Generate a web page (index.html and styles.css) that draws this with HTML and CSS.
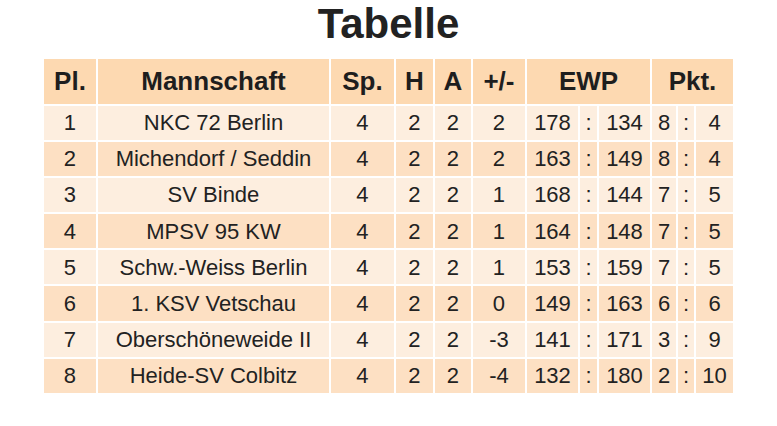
FILE: index.html
```html
<!DOCTYPE html>
<html lang="de">
<head>
<meta charset="utf-8">
<title>Tabelle</title>
<link rel="stylesheet" href="styles.css">
</head>
<body>
<h1 class="title">Tabelle</h1>
<table class="standings">
  <colgroup>
    <col class="c-pl"><col class="c-team"><col class="c-sp"><col class="c-h"><col class="c-a"><col class="c-diff">
    <col class="c-ewp1"><col class="c-colon1"><col class="c-ewp2"><col class="c-pkt1"><col class="c-colon2"><col class="c-pkt2">
  </colgroup>
  <thead>
    <tr><th>Pl.</th><th>Mannschaft</th><th>Sp.</th><th>H</th><th>A</th><th>+/-</th><th colspan="3">EWP</th><th colspan="3">Pkt.</th></tr>
  </thead>
  <tbody>
    <tr class="odd"><td>1</td><td>NKC 72 Berlin</td><td>4</td><td>2</td><td>2</td><td>2</td><td>178</td><td>:</td><td>134</td><td>8</td><td>:</td><td>4</td></tr>
    <tr class="even"><td>2</td><td>Michendorf / Seddin</td><td>4</td><td>2</td><td>2</td><td>2</td><td>163</td><td>:</td><td>149</td><td>8</td><td>:</td><td>4</td></tr>
    <tr class="odd"><td>3</td><td>SV Binde</td><td>4</td><td>2</td><td>2</td><td>1</td><td>168</td><td>:</td><td>144</td><td>7</td><td>:</td><td>5</td></tr>
    <tr class="even"><td>4</td><td>MPSV 95 KW</td><td>4</td><td>2</td><td>2</td><td>1</td><td>164</td><td>:</td><td>148</td><td>7</td><td>:</td><td>5</td></tr>
    <tr class="odd"><td>5</td><td>Schw.-Weiss Berlin</td><td>4</td><td>2</td><td>2</td><td>1</td><td>153</td><td>:</td><td>159</td><td>7</td><td>:</td><td>5</td></tr>
    <tr class="even"><td>6</td><td>1. KSV Vetschau</td><td>4</td><td>2</td><td>2</td><td>0</td><td>149</td><td>:</td><td>163</td><td>6</td><td>:</td><td>6</td></tr>
    <tr class="odd"><td>7</td><td>Oberschöneweide II</td><td>4</td><td>2</td><td>2</td><td>-3</td><td>141</td><td>:</td><td>171</td><td>3</td><td>:</td><td>9</td></tr>
    <tr class="even"><td>8</td><td>Heide-SV Colbitz</td><td>4</td><td>2</td><td>2</td><td>-4</td><td>132</td><td>:</td><td>180</td><td>2</td><td>:</td><td>10</td></tr>
  </tbody>
</table>
</body>
</html>
```
FILE: styles.css
```css
html, body {
  margin: 0;
  padding: 0;
  background: #ffffff;
}
body {
  font-family: "Liberation Sans", Arial, sans-serif;
  color: #222222;
}
.title {
  margin: 0 0 10px;
  font-size: 42px;
  line-height: 47px;
  font-weight: bold;
  text-align: center;
  color: #222222;
}
.standings {
  margin: 0 auto;
  border-collapse: separate;
  border-spacing: 2px;
  table-layout: fixed;
  width: 693px;
}
.c-pl { width: 52px; }
.c-team { width: 231px; }
.c-sp { width: 63px; }
.c-h { width: 37px; }
.c-a { width: 36px; }
.c-diff { width: 52px; }
.c-ewp1 { width: 51px; }
.c-colon1 { width: 17px; }
.c-ewp2 { width: 51px; }
.c-pkt1 { width: 24px; }
.c-colon2 { width: 16px; }
.c-pkt2 { width: 37px; }
.standings th {
  background: #fdd9b1;
  font-size: 26px;
  font-weight: bold;
  line-height: 30px;
  height: 44.5px;
  padding: 0;
  text-align: center;
  color: #1e1e1e;
}
.standings td {
  font-size: 22px;
  line-height: 25px;
  height: 34.2px;
  padding: 0;
  text-align: center;
  white-space: nowrap;
}
.odd td { background: #fdeedf; }
.even td { background: #fde0c3; }
```
